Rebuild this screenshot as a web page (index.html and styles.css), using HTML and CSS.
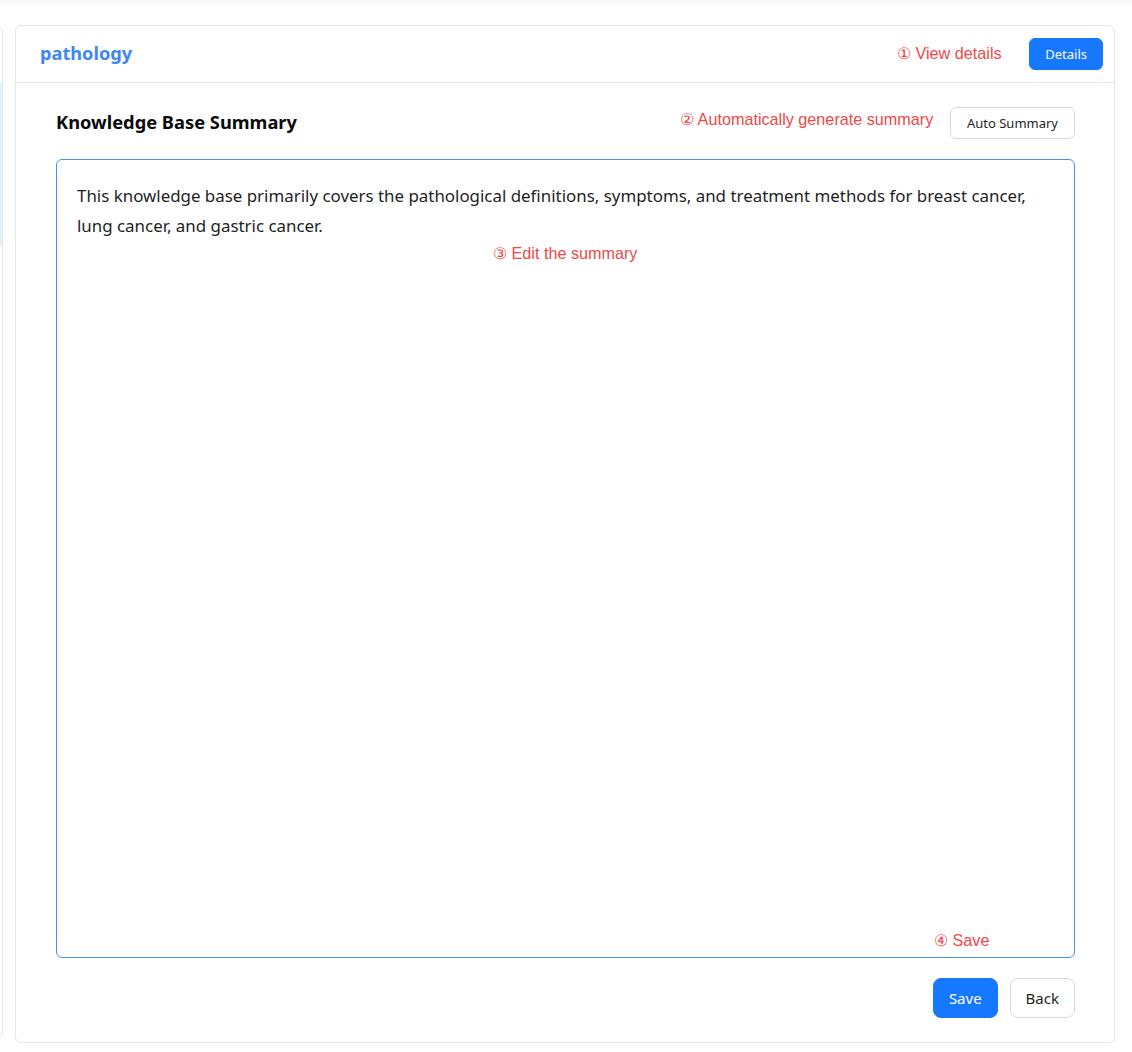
FILE: index.html
```html
<!DOCTYPE html>
<html lang="en">
<head>
<meta charset="utf-8">
<title>pathology</title>
<link rel="stylesheet" href="styles.css">
</head>
<body>
<div class="topstrip"></div>
<div class="layout">
  <aside class="side">
    <div class="side-active"></div>
  </aside>
  <main class="card">
    <header class="card-head">
      <h1 class="kb-name">pathology</h1>
      <button class="btn btn-primary btn-sm">Details</button>
      <span class="note note-1">① View details</span>
    </header>
    <section class="card-body">
      <div class="title-row">
        <h2 class="title">Knowledge Base Summary</h2>
        <button class="btn btn-default btn-sm btn-auto">Auto Summary</button>
        <span class="note note-2">② Automatically generate summary</span>
      </div>
      <div class="editor">
        <div class="editor-text">This knowledge base primarily covers the pathological definitions, symptoms, and treatment methods for breast cancer, lung cancer, and gastric cancer.</div>
        <span class="note note-3">③ Edit the summary</span>
        <span class="note note-4">④ Save</span>
      </div>
      <div class="actions">
        <button class="btn btn-primary btn-lg">Save</button>
        <button class="btn btn-default btn-lg">Back</button>
      </div>
    </section>
  </main>
</div>
</body>
</html>
```
FILE: styles.css
```css
* { box-sizing: border-box; }
html, body { margin: 0; padding: 0; background: #fff; }
body {
  font-family: "Noto Sans", "Open Sans", sans-serif;
  color: #1f1f1f;
  overflow: hidden;
}
.topstrip { height: 5px; background: #f7f8fa; }
.layout {
  display: flex;
  padding-top: 20px;
  height: 1047px;
}
.side {
  width: 200px;
  margin-left: -197px;
  height: 1015px;
  border: 1px solid #e4e6ea;
  border-radius: 8px;
  padding-top: 57px;
  flex: none;
}
.side-active {
  height: 163px;
  background: #e6f0fb;
}
.card {
  margin-left: 12px;
  width: 1100px;
  height: 1018px;
  border: 1px solid #e4e6ea;
  border-radius: 6px;
  display: flex;
  flex-direction: column;
  flex: none;
}
.card-head {
  position: relative;
  height: 57px;
  border-bottom: 1px solid #e4e6ea;
  display: flex;
  align-items: center;
  justify-content: space-between;
  padding: 0 11px 0 24px;
}
.kb-name {
  margin: 0;
  font-size: 18.2px;
  font-weight: 700;
  color: #3f86f5;
  line-height: 1;
  padding-bottom: 1px;
}
.btn {
  font-family: "Noto Sans", "Open Sans", sans-serif;
  border-radius: 6px;
  border: 1px solid #d9d9d9;
  background: #fff;
  color: #1f1f1f;
  cursor: pointer;
  padding: 0 15px;
}
.btn-primary {
  background: #1677ff;
  border-color: #1677ff;
  color: #fff;
}
.btn-sm { height: 32px; font-size: 13px; }
.btn-auto { padding: 0 16px; }
.btn-lg { height: 40px; font-size: 15px; border-radius: 8px; }
.card-body {
  flex: 1;
  display: flex;
  flex-direction: column;
  padding: 24px 39px 24px 40px;
}
.title-row {
  position: relative;
  display: flex;
  align-items: center;
  justify-content: space-between;
  height: 32px;
}
.title {
  margin: 0;
  font-size: 18.3px;
  font-weight: 700;
  color: #0a0a0a;
  line-height: 1;
  padding-bottom: 2px;
}
.editor {
  position: relative;
  margin-top: 20px;
  height: 799px;
  border: 1px solid #4a90f0;
  border-radius: 6px;
  padding: 21px 20px;
}
.editor-text {
  font-size: 16.9px;
  line-height: 30px;
  color: #1f1f1f;
}
.actions {
  margin-top: 20px;
  display: flex;
  justify-content: flex-end;
  gap: 12px;
}
.note {
  position: absolute;
  font-family: "Liberation Sans", Arial, sans-serif;
  font-size: 16.2px;
  color: #f04848;
  white-space: nowrap;
  line-height: 1;
}
.note-1 { left: 881px; top: 19px; }
.note-2 { left: 624px; top: 4px; }
.note-3 { left: 436px; top: 85px; }
.note-4 { left: 877px; top: 772px; }
```
